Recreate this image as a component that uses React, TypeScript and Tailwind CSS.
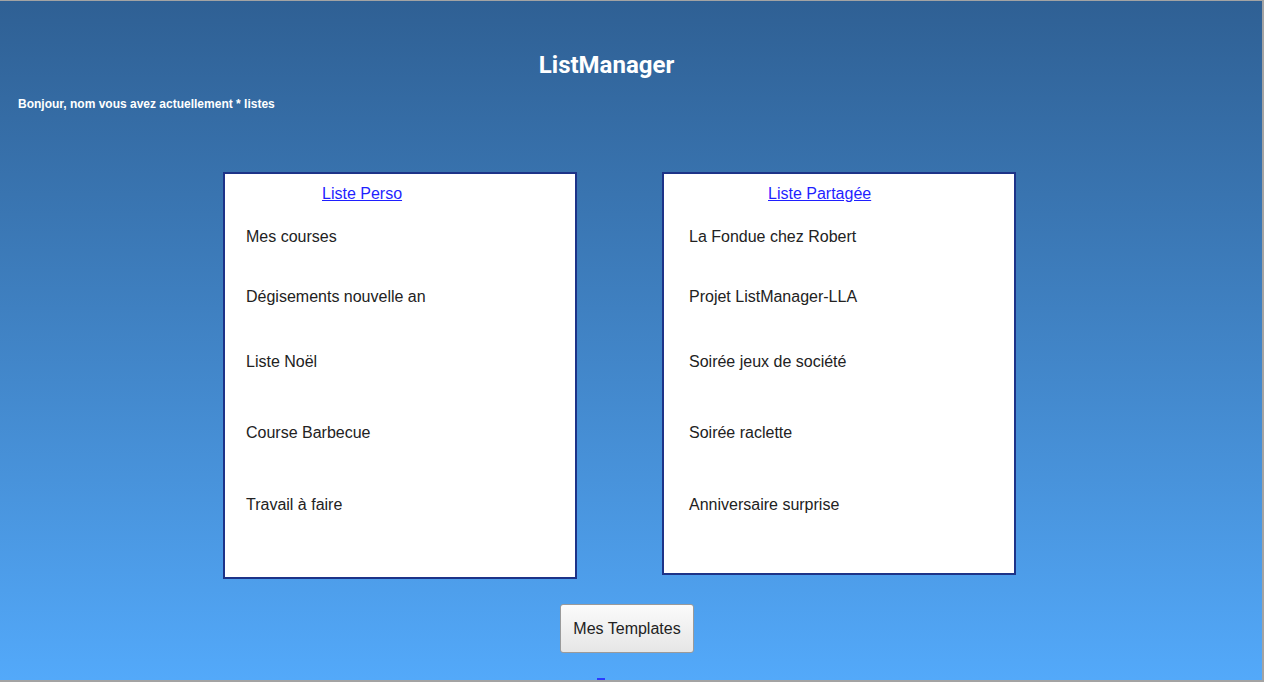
const persoLists = [
  "Mes courses",
  "Dégisements nouvelle an",
  "Liste Noël",
  "Course Barbecue",
  "Travail à faire",
];

const sharedLists = [
  "La Fondue chez Robert",
  "Projet ListManager-LLA",
  "Soirée jeux de société",
  "Soirée raclette",
  "Anniversaire surprise",
];

// spacing after each item, the original page is not regular
const gaps = ["mb-[42px]", "mb-[47px]", "mb-[53px]", "mb-[54px]", "mb-0"];

function ListCard({
  title,
  items,
  titlePad,
  itemPad,
  height,
}: {
  title: string;
  items: string[];
  titlePad: string;
  itemPad: string;
  height: string;
}) {
  return (
    <div className={`w-[354px] ${height} border-2 border-[#1d3388] bg-white`}>
      <div className={`pt-[8px] ${titlePad}`}>
        <a href="#" className="text-[16px] leading-[18px] text-[#1f1fff] underline">
          {title}
        </a>
      </div>
      <ul className={`mt-[22px] ${itemPad}`}>
        {items.map((item, i) => (
          <li key={item} className={`text-[16px] leading-[18px] text-[#222] ${gaps[i]}`}>
            {item}
          </li>
        ))}
      </ul>
    </div>
  );
}

export default function App() {
  return (
    <div
      className="h-[682px] w-[1264px] overflow-hidden border-t border-r-2 border-b-2 border-[#a3a3a3] bg-linear-to-b from-[#2f6094] to-[#53a9fa]"
      style={{ fontFamily: '"Liberation Sans", Arial, sans-serif' }}
    >
      <div className="flex flex-col">
        <h1
          className="mt-[50px] pr-[49px] text-center text-[24px] leading-[28px] font-bold text-white"
          style={{ fontFamily: "Roboto, sans-serif" }}
        >
          ListManager
        </h1>
        <p className="mt-[18px] ml-[18px] text-[12px] leading-[14px] font-bold text-white">
          Bonjour, nom vous avez actuellement * listes
        </p>

        <div className="mt-[61px] ml-[223px] flex items-start gap-[85px]">
          <ListCard
            title="Liste Perso"
            items={persoLists}
            titlePad="pl-[97px]"
            itemPad="pl-[21px]"
            height="h-[407px]"
          />
          <ListCard
            title="Liste Partagée"
            items={sharedLists}
            titlePad="pl-[104px]"
            itemPad="pl-[25px]"
            height="h-[403px]"
          />
        </div>

        <div className="mt-[25px] ml-[560px]">
          <button className="h-[49px] w-[134px] rounded-[3px] border border-[#9a9a9a] bg-linear-to-b from-[#fbfbfb] to-[#e6e6e6] text-[16px] text-[#222]">
            Mes Templates
          </button>
        </div>

        <div className="mt-[25px] ml-[597px] h-[2px] w-[8px] bg-[#2a3aff]" />
      </div>
    </div>
  );
}
